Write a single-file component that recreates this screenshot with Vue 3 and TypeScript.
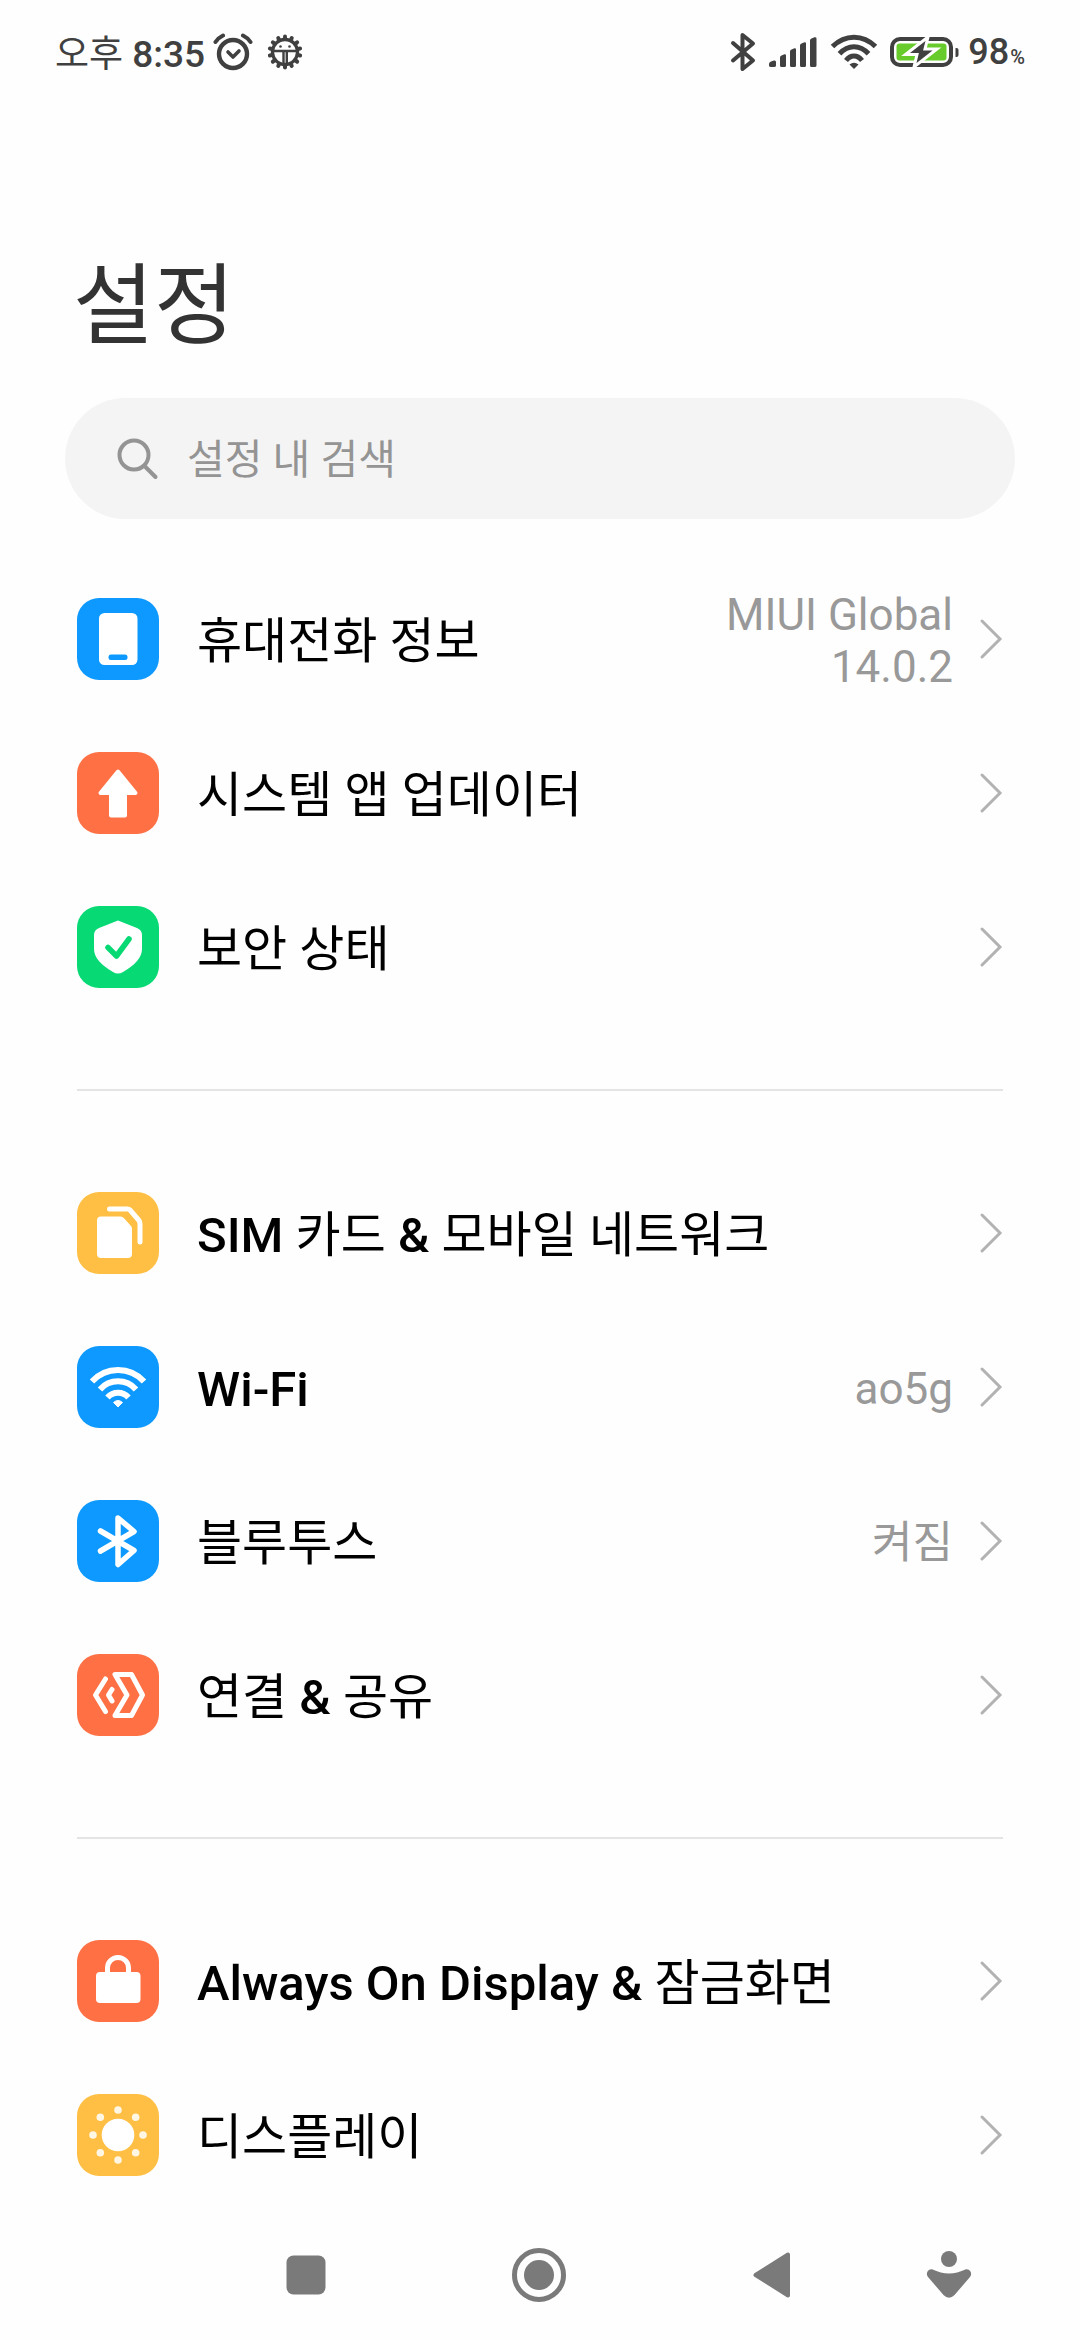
<script setup lang="ts">
type IconName = 'phone' | 'update' | 'shield' | 'sim' | 'wifi' | 'bluetooth' | 'share' | 'lock' | 'display'

interface SettingItem {
  label: string
  icon: IconName
  color: 'blue' | 'orange' | 'green' | 'yellow'
  value?: string
}

const groups: SettingItem[][] = [
  [
    { label: '휴대전화 정보', icon: 'phone', color: 'blue', value: 'MIUI Global 14.0.2' },
    { label: '시스템 앱 업데이터', icon: 'update', color: 'orange' },
    { label: '보안 상태', icon: 'shield', color: 'green' },
  ],
  [
    { label: 'SIM 카드 & 모바일 네트워크', icon: 'sim', color: 'yellow' },
    { label: 'Wi-Fi', icon: 'wifi', color: 'blue', value: 'ao5g' },
    { label: '블루투스', icon: 'bluetooth', color: 'blue', value: '켜짐' },
    { label: '연결 & 공유', icon: 'share', color: 'orange' },
  ],
  [
    { label: 'Always On Display & 잠금화면', icon: 'lock', color: 'orange' },
    { label: '디스플레이', icon: 'display', color: 'yellow' },
  ],
]

// Latin runs are set in medium weight, Hangul runs in regular.
function runs(label: string): { text: string; latin: boolean }[] {
  return (label.match(/[가-힣]+|[^가-힣]+/g) ?? []).map((text) => ({ text, latin: !/[가-힣]/.test(text) }))
}

const rays = Array.from({ length: 8 }, (_, i) => ({
  x: 41 + 25 * Math.cos((i * Math.PI) / 4),
  y: 41 + 25 * Math.sin((i * Math.PI) / 4),
}))

const teeth = Array.from({ length: 14 }, (_, i) => (i * 360) / 14)
</script>

<template>
  <div class="screen">
    <header class="status">
      <div class="status-side">
        <span class="clock">오후 <b>8:35</b></span>
        <svg class="alarm" width="40" height="38" viewBox="0 0 40 38" fill="none" stroke="#404040" stroke-linecap="round">
          <circle cx="20" cy="21" r="14" stroke-width="4.400" />
          <path d="M15 19l5 5 6-6" stroke-width="3.600" stroke-linejoin="round" />
          <path d="M2.500 9Q5 5 10 2.500M37.500 9Q35 5 30 2.500" stroke-width="4" />
        </svg>
        <svg class="gear" width="36" height="36" viewBox="0 0 36 36" fill="none" stroke="#404040">
          <circle cx="18" cy="18" r="12.500" stroke-width="3.400" />
          <path v-for="t in teeth" :key="t" d="M18 5V2.500" stroke-width="4" stroke-linecap="round" :transform="`rotate(${t} 18 18)`" />
          <path d="M4 17H32M16.500 18V31M19.800 18V31" stroke-width="2.400" />
          <circle cx="13.500" cy="12.500" r="1.300" fill="#404040" stroke="none" />
          <circle cx="22.500" cy="12.500" r="1.300" fill="#404040" stroke="none" />
        </svg>
      </div>
      <div class="status-side">
        <svg width="26" height="40" viewBox="0 0 26 40" fill="none" stroke="#404040" stroke-width="4" stroke-linecap="round" stroke-linejoin="round">
          <path d="M3 11L23 28.500L12.500 37V3L23 11.500L3 28.500" />
        </svg>
        <svg class="signal" width="50" height="32" viewBox="0 0 50 32" fill="#404040">
          <path d="M1 28Q1 26 3 25.500L6 24.500Q8 24 8 26V29.500Q8 31 6 31H3Q1 31 1 29.500Z" />
          <path d="M12 21.500Q12 20 13.500 19.500L16.500 18.300Q18 18 18 19.500V29.500Q18 31 16.500 31H13.500Q12 31 12 29.500Z" />
          <path d="M22 15.500Q22 14 23.500 13.500L26.500 12.300Q28 12 28 13.500V29.500Q28 31 26.500 31H23.500Q22 31 22 29.500Z" />
          <path d="M32 9.500Q32 8 33.500 7.500L36.500 6.300Q38 6 38 7.500V29.500Q38 31 36.500 31H33.500Q32 31 32 29.500Z" />
          <path d="M42 4.500Q42 3 43.500 2.500L46.500 1.300Q48.500 1 48.500 2.500V29.500Q48.500 31 46.500 31H43.500Q42 31 42 29.500Z" />
        </svg>
        <svg class="wifi-status" width="48" height="36" viewBox="0 0 48 36" fill="none" stroke="#404040" stroke-width="5">
          <path d="M2.500 12.500Q12 3.200 24 3.200T45.500 12.500" />
          <path d="M9.500 19.800Q16 12.800 24 12.800T38.500 19.800" />
          <path d="M16 26.500Q19.500 22 24 22T32 26.500" />
          <path d="M19.500 30.500Q24 27 28.500 30.500L24 35Z" fill="#404040" stroke="none" />
        </svg>
        <svg class="battery" width="70" height="38" viewBox="0 0 70 38">
          <rect x="2" y="6" width="59" height="26" rx="8" fill="none" stroke="#404040" stroke-width="4" />
          <rect x="6.500" y="10.500" width="50" height="17" rx="3" fill="#67cb2b" />
          <path d="M65.500 15h1q2 0 2 2v5q0 2-2 2h-1z" fill="#404040" />
          <path d="M38 4L15.500 21.500H27L24 34L47 16H35Z" fill="#404040" stroke="#fff" stroke-width="3" />
        </svg>
        <span class="level"><b>98</b><small>%</small></span>
      </div>
    </header>

    <main class="content">
      <h1>설정</h1>
      <label class="search">
        <svg width="42" height="42" viewBox="0 0 42 42" fill="none" stroke="#949494" stroke-width="4" stroke-linecap="round">
          <circle cx="17" cy="17" r="14.500" />
          <path d="M27.500 28L38.500 39" />
        </svg>
        <input type="search" placeholder="설정 내 검색" aria-label="설정 내 검색" />
      </label>

      <nav v-for="(group, g) in groups" :key="g" class="group">
        <a v-for="item in group" :key="item.label" class="row" href="#">
          <svg class="tile" :class="item.color" viewBox="0 0 82 82" fill="none" stroke-linecap="round" stroke-linejoin="round">
            <template v-if="item.icon === 'phone'">
              <rect x="22" y="15" width="38.500" height="52" rx="5.500" fill="#fff" />
              <rect x="31.500" y="56.500" width="19" height="5.500" rx="2.500" fill="#0d99ff" />
            </template>
            <path v-else-if="item.icon === 'update'" d="M41 19.500L58.500 41H48V63.500H34V41H23.500Z" fill="#fff" stroke="#fff" stroke-width="4" />
            <template v-else-if="item.icon === 'shield'">
              <path d="M41 14.500L60 22Q65 24 65 29V43Q65 55 46 66Q41 69 36 66Q17 55 17 43V29Q17 24 22 22Z" fill="#fff" />
              <path d="M31 41.500L39.500 50L52 33" stroke="#07d975" stroke-width="5.500" />
            </template>
            <template v-else-if="item.icon === 'sim'">
              <path d="M24 24.500H43.500Q45.500 24.500 46.800 26L54 34Q55 35 55 37V62Q55 66 51 66H24Q20 66 20 62V28.500Q20 24.500 24 24.500Z" fill="#fff" />
              <path d="M32.500 17H50.500Q52 17 53 18L62 28.500Q63 30 63 32V50" stroke="#fff" stroke-width="5" />
            </template>
            <g v-else-if="item.icon === 'wifi'" stroke="#fff" stroke-width="6" stroke-linecap="butt">
              <path d="M15 35.500A35 35 0 0 1 67 35.500" />
              <path d="M23 43.500A24 24 0 0 1 59 43.500" />
              <path d="M30.500 51.500A14 14 0 0 1 51.500 51.500" />
              <path d="M36.500 56.500Q41 52.500 45.500 56.500L41 61Z" fill="#fff" stroke-width="1" stroke-linejoin="round" />
            </g>
            <path v-else-if="item.icon === 'bluetooth'" d="M23.500 31L57 50.500L41 64.500V18L57 31.500L23.500 51" stroke="#fff" stroke-width="5.500" />
            <g v-else-if="item.icon === 'share'" stroke="#fff" stroke-width="5">
              <path d="M28.500 25L18.500 41L28.500 57.500" />
              <path d="M35 35.500L31.500 41L35 47" />
              <path d="M38 20.500H54.500L65.500 41L54.500 61.500H38L50 41Z" />
            </g>
            <template v-else-if="item.icon === 'lock'">
              <rect x="19" y="32" width="44.500" height="31" rx="4" fill="#fff" />
              <path d="M30.500 34V28A10.500 10.500 0 0 1 51.500 28V34" stroke="#fff" stroke-width="5" />
            </template>
            <template v-else>
              <circle cx="41" cy="41" r="16.300" fill="#fff" />
              <circle v-for="(ray, i) in rays" :key="i" :cx="ray.x" :cy="ray.y" r="3.800" fill="#fff" fill-opacity=".85" />
            </template>
          </svg>
          <span class="label"><span v-for="(run, r) in runs(item.label)" :key="r" :class="{ latin: run.latin }">{{ run.text }}</span></span>
          <span v-if="item.value" class="value">{{ item.value }}</span>
          <svg class="chevron" width="24" height="42" viewBox="0 0 24 42" fill="none" stroke="#b2b2b2" stroke-width="3" stroke-linecap="round">
            <path d="M3 3L21 21L3 39" />
          </svg>
        </a>
      </nav>
    </main>

    <footer class="navbar">
      <button type="button" aria-label="최근 앱">
        <svg width="56" height="56" viewBox="0 0 56 56" fill="#7a7a7a"><rect x="8.500" y="8.500" width="39" height="39" rx="7" /></svg>
      </button>
      <button type="button" aria-label="홈">
        <svg width="56" height="56" viewBox="0 0 56 56" fill="#7a7a7a">
          <circle cx="28" cy="28" r="24.500" fill="none" stroke="#7a7a7a" stroke-width="5" />
          <circle cx="28" cy="28" r="15" />
        </svg>
      </button>
      <button type="button" aria-label="뒤로">
        <svg width="56" height="56" viewBox="0 0 56 56" fill="#7a7a7a" stroke="#7a7a7a" stroke-width="4" stroke-linejoin="round"><path d="M11.500 28L44 7.500V48.500Z" /></svg>
      </button>
      <button type="button" aria-label="접근성">
        <svg width="56" height="56" viewBox="0 0 56 56" fill="#7a7a7a">
          <circle cx="28" cy="12" r="8" />
          <path d="M11 22.300Q20 26.500 28 26.500T45 22.300Q48 22 49.500 24.500Q51 27.500 49 30L33.500 48Q28 53.500 22.500 48L7 30Q5 27.500 6.500 24.500Q8 22 11 22.300Z" />
        </svg>
      </button>
    </footer>
  </div>
</template>

<style>
body {
  background: #fefefe;
}
</style>

<style scoped>
.screen {
  display: flex;
  flex-direction: column;
  min-height: 100vh;
  font-family: Roboto, 'Noto Sans CJK KR', sans-serif;
  color: #000;
}

.status {
  display: flex;
  justify-content: space-between;
  align-items: center;
  height: 104px;
  padding: 0 55px;
  color: #404040;
  font-size: 36px;
}

.status-side {
  display: flex;
  align-items: center;
}

.status b {
  font-weight: 500;
}

.clock {
  padding-bottom: 3px;
  font-size: 37px;
}

.alarm {
  margin-left: 8px;
}

.gear {
  margin-left: 14px;
}

.signal {
  margin-left: 12px;
}

.wifi-status {
  margin-left: 12px;
}

.battery {
  margin: 0 8px 0 12px;
}

.level small {
  margin-left: 1px;
  font-size: 20px;
  font-weight: 500;
}

.content {
  padding: 0 65px;
}

h1 {
  margin: 148px 0 38px;
  padding-left: 8px;
  font-size: 88px;
  font-weight: 400;
  line-height: 108px;
  color: #333;
}

.search {
  display: flex;
  align-items: center;
  gap: 28px;
  height: 121px;
  margin-bottom: 43px;
  padding: 0 52px;
  border-radius: 61px;
  background: #f4f4f4;
}

.search input {
  flex: 1;
  min-width: 0;
  padding: 2px 0 0;
  border: 0;
  outline: 0;
  background: none;
  font: inherit;
  font-size: 41px;
  color: #333;
}

.search input::placeholder {
  color: #949494;
  opacity: 1;
}

.group {
  margin: 0 12px;
}

.group + .group {
  margin-top: 65px;
  padding-top: 65px;
  border-top: 2px solid #e4e4e4;
}

.row {
  display: flex;
  align-items: center;
  height: 154px;
  color: inherit;
  text-decoration: none;
}

.tile {
  flex: none;
  width: 82px;
  height: 82px;
  margin-right: 38px;
  border-radius: 22px;
}

.blue { background: #0d99ff; }
.orange { background: #ff7045; }
.green { background: #07d975; }
.yellow { background: #ffbf44; }

.label {
  flex: 1;
  padding-top: 5px;
  font-size: 49px;
  line-height: 60px;
  white-space: pre-wrap;
}

.latin {
  font-weight: 500;
}

.value {
  max-width: 240px;
  padding-top: 4px;
  font-size: 44px;
  line-height: 52px;
  color: #999;
  text-align: right;
}

.chevron {
  flex: none;
  margin-left: 26px;
}

.navbar {
  display: grid;
  grid-template-columns: 233fr 233fr 233fr 123fr;
  box-sizing: border-box;
  height: 128px;
  margin-top: auto;
  padding: 0 6.4% 2px 17.6%;
}

.navbar button {
  display: flex;
  align-items: center;
  justify-content: center;
  padding: 0;
  border: 0;
  background: none;
}
</style>
